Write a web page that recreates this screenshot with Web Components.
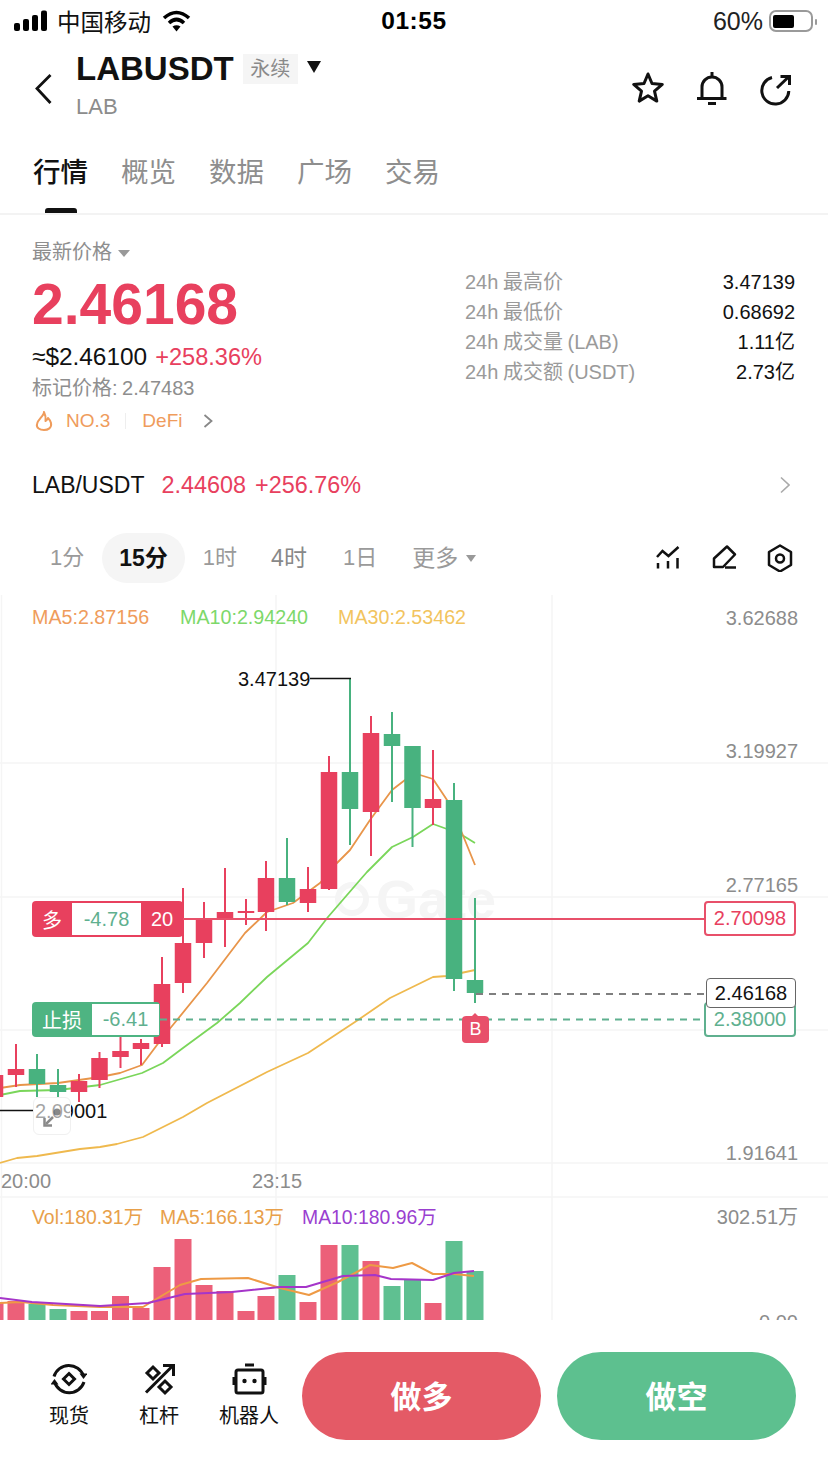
<!DOCTYPE html>
<html lang="zh">
<head>
<meta charset="utf-8">
<title>LABUSDT</title>
<style>
  html, body { margin: 0; background: #fff; }
  body { width: 828px; font-family: "Liberation Sans", "Noto Sans CJK SC", sans-serif; color: #000; }
</style>
</head>
<body>
<status-bar></status-bar>
<market-header></market-header>
<market-tabs></market-tabs>
<price-panel></price-panel>
<pair-row></pair-row>
<period-bar></period-bar>
<kline-chart></kline-chart>
<trade-bar></trade-bar>

<script>
  (function page(customElements) {
    const RED = '#e8405e';
    const GREEN = '#48b27f';

    class StatusBar extends HTMLElement {
      constructor() {
        super();
        const shadowRoot = this.attachShadow({mode: 'open'});
        shadowRoot.innerHTML = `
          <style>
            :host { display: grid; grid-template-columns: 1fr auto 1fr; align-items: center; height: 42px; padding: 0 10px 0 13px; box-sizing: border-box; }
            .left, .right { display: flex; align-items: center; }
            .left { gap: 9px; font-size: 23.5px; color: #111; }
            .right { justify-content: flex-end; gap: 6px; font-size: 25px; color: #222; }
            .time { font-size: 24.5px; font-weight: 700; letter-spacing: .6px; margin-left: -3px; }
            svg { display: block; }
          </style>
          <div class="left">
            <svg width="35" height="22" viewBox="13 9 35 22"><g fill="#000"><rect x="14" y="22" width="6" height="8" rx="2"/><rect x="23" y="18" width="6" height="12" rx="2"/><rect x="32" y="14" width="6" height="16" rx="2"/><rect x="41" y="9.5" width="6" height="20.5" rx="2"/></g></svg>
            <span>中国移动</span>
            <svg width="30" height="22" viewBox="163 10 30 22" style="margin-left:2px"><g fill="none" stroke="#000" stroke-width="3.6"><path d="M165 18Q177.5 7 190 18"/><path d="M170 23Q177.5 16 185 23"/></g><path d="M173.5 26.5Q177.5 24 181.5 26.5L177.5 31.5Z" fill="#000"/></svg>
          </div>
          <div class="time">01:55</div>
          <div class="right">
            <span>60%</span>
            <svg width="49" height="24" viewBox="769 8 49 24"><rect x="770" y="10" width="42" height="20" rx="6" fill="none" stroke="#9a9a9a" stroke-width="2"/><rect x="773" y="14" width="21" height="13" rx="2" fill="#000"/><rect x="815" y="18" width="2" height="6" rx="1" fill="#9a9a9a"/></svg>
          </div>
        `;
      }
    }

    class MarketHeader extends HTMLElement {
      constructor() {
        super();
        const shadowRoot = this.attachShadow({mode: 'open'});
        shadowRoot.innerHTML = `
          <style>
            :host { display: flex; align-items: center; height: 88px; padding: 0 35px; box-sizing: border-box; }
            svg { display: block; flex: none; margin-top: 6px; }
            .title { align-self: flex-start; margin-left: 24px; padding-top: 9px; }
            .line { display: flex; align-items: center; }
            .name { font-size: 33px; font-weight: 700; line-height: 36px; color: #111; }
            .kind { margin-left: 9px; width: 55px; height: 30px; line-height: 30px; text-align: center; background: #f5f5f5; color: #8a8a8a; font-size: 20px; margin-top: -1px; }
            .caret { margin-left: 9px; width: 0; height: 0; border: 7px solid transparent; border-top: 12px solid #111; border-bottom: 0; margin-top: -4px; }
            .sub { margin-top: 8px; line-height: 24px; font-size: 22px; color: #8c8c8c; }
            .icons { margin-left: auto; display: flex; gap: 30px; }
          </style>
          <svg width="17" height="32" viewBox="35 73 17 32"><path d="M50.5 75L37 88.5L50.5 103" fill="none" stroke="#111" stroke-width="2.8"/></svg>
          <div class="title">
            <div class="line"><span class="name">LABUSDT</span><span class="kind">永续</span><span class="caret"></span></div>
            <div class="sub">LAB</div>
          </div>
          <div class="icons">
            <svg width="34" height="34" viewBox="631 72 34 34"><path d="M648 74L652 83.5L662.3 84.4L654.5 91.1L656.8 101.1L648 95.8L639.2 101.1L641.5 91.1L633.7 84.4L644 83.5Z" fill="none" stroke="#111" stroke-width="3" stroke-linejoin="round"/></svg>
            <svg width="34" height="34" viewBox="695 72 34 34"><g fill="none" stroke="#111" stroke-width="3"><path d="M702 98V87a10 10 0 0 1 20 0V98"/><path d="M697 98.5H726.5"/><path d="M712 72V77"/><path d="M708 103.5H716"/></g></svg>
            <svg width="34" height="34" viewBox="759 72 34 34"><g fill="none" stroke="#111" stroke-width="3"><path d="M772 77.5A13.5 13.5 0 1 0 788.8 91"/><path d="M777 88L789 76.5"/><path d="M780.5 76.5H789.5V85"/></g></svg>
          </div>
        `;
      }
    }

    class MarketTabs extends HTMLElement {
      constructor() {
        super();
        const shadowRoot = this.attachShadow({mode: 'open'});
        const tabs = ['行情', '概览', '数据', '广场', '交易'];
        shadowRoot.innerHTML = `
          <style>
            :host { display: flex; gap: 33px; height: 85px; padding-left: 33px; box-sizing: border-box; border-bottom: 2px solid #f3f3f3; }
            .tab { padding-top: 29px; font-size: 27.5px; line-height: 27px; color: #8e8e8e; display: flex; flex-direction: column; align-items: center; width: 55px; white-space: nowrap; }
            .tab.on { color: #111; font-weight: 500; }
            .tab.on::after { content: ''; display: block; width: 32px; height: 5px; margin-top: 22px; border-radius: 3px 3px 0 0; background: #111; }
          </style>
          ${tabs.map((t, i) => `<div class="tab ${i === 0 ? 'on' : ''}">${t}</div>`).join('')}
        `;
      }
    }

    class PricePanel extends HTMLElement {
      constructor() {
        super();
        const shadowRoot = this.attachShadow({mode: 'open'});
        const rows = [
          ['24h 最高价', '3.47139'],
          ['24h 最低价', '0.68692'],
          ['24h 成交量 (LAB)', '1.11亿'],
          ['24h 成交额 (USDT)', '2.73亿']
        ];
        shadowRoot.innerHTML = `
          <style>
            :host { display: grid; grid-template-columns: 433px 330px; height: 235px; padding-left: 32px; box-sizing: border-box; }
            .latest { margin-top: 26px; line-height: 22px; font-size: 20px; color: #8e8e8e; display: flex; align-items: center; }
            .latest i { margin-left: 6px; margin-top: 3px; border: 6px solid transparent; border-top: 7px solid #999; border-bottom: 0; }
            .price { margin-top: 11px; line-height: 60px; font-size: 57px; font-weight: 700; color: ${RED}; }
            .fiat { margin-top: 9px; line-height: 28px; font-size: 24.4px; color: #111; white-space: nowrap; }
            .fiat span { margin-left: 8px; font-size: 23.6px; color: ${RED}; }
            .mark { margin-top: 5px; line-height: 24px; font-size: 20px; word-spacing: -1px; color: #8e8e8e; }
            .tags { margin-top: 9px; height: 24px; display: flex; align-items: center; font-size: 19px; color: #ef9c5c; }
            .tags svg { display: block; }
            .tags b { font-weight: 400; }
            .sep { width: 1px; height: 16px; background: #eee; margin: 0 16px 0 15px; }
            .table { padding-top: 52px; }
            .row { display: flex; justify-content: space-between; line-height: 30px; font-size: 20px; word-spacing: -1px; }
            .row span { color: #9a9a9a; }
            .row b { font-weight: 400; color: #111; }
          </style>
          <div>
            <div class="latest">最新价格<i></i></div>
            <div class="price">2.46168</div>
            <div class="fiat">≈$2.46100<span>+258.36%</span></div>
            <div class="mark">标记价格: 2.47483</div>
            <div class="tags">
              <svg width="31" height="22" viewBox="35 410 31 22" style="margin-left:3px"><path d="M44 412C44 416 38 419 37 424C36 428 40 430 44 430C48 430 52 428 51 423C50.5 420.5 49 419 48 418C47.5 420 46.5 420.5 45.5 421C46 418 45.5 415 44 412Z" fill="none" stroke="#ef9c5c" stroke-width="2" stroke-linejoin="round"/></svg>
              <b>NO.3</b><span class="sep"></span><b>DeFi</b>
              <svg width="10" height="16" viewBox="0 0 10 16" style="margin-left:21px"><path d="M1.5 2L8.5 8L1.5 14" fill="none" stroke="#888" stroke-width="1.8"/></svg>
            </div>
          </div>
          <div class="table">
            ${rows.map(r => `<div class="row"><span>${r[0]}</span><b>${r[1]}</b></div>`).join('')}
          </div>
        `;
      }
    }

    class PairRow extends HTMLElement {
      constructor() {
        super();
        const shadowRoot = this.attachShadow({mode: 'open'});
        shadowRoot.innerHTML = `
          <style>
            :host { display: flex; align-items: center; height: 70px; padding: 0 38px 0 32px; box-sizing: border-box; font-size: 23px; }
            .name { color: #111; }
            .val { margin-left: 17px; color: ${RED}; font-size: 23.4px; }
            .val span { margin-left: 9px; }
            svg { display: block; margin-left: auto; }
          </style>
          <span class="name">LAB/USDT</span>
          <span class="val">2.44608<span>+256.76%</span></span>
          <svg width="10" height="18" viewBox="0 0 10 18"><path d="M1 1.5L9 9L1 16.5" fill="none" stroke="#aaa" stroke-width="1.6"/></svg>
        `;
      }
    }

    class PeriodBar extends HTMLElement {
      constructor() {
        super();
        const shadowRoot = this.attachShadow({mode: 'open'});
        shadowRoot.innerHTML = `
          <style>
            :host { display: flex; align-items: center; height: 75px; padding: 0 34px 0 33px; box-sizing: border-box; }
            .item { padding: 0 17px; height: 50px; line-height: 50px; font-size: 22px; color: #9a9a9a; white-space: nowrap; display: flex; align-items: center; }
            .item.on { background: #f5f5f5; color: #111; font-weight: 700; font-size: 23px; border-radius: 25px; margin: 0 1px 0 1px; }
            .item.h4 { font-size: 23px; color: #888; }
            .item.d1 { margin-left: 2px; }
            .item.more { margin-left: 1px; font-size: 23px; }
            .item i { margin-left: 8px; margin-top: 2px; border: 5.5px solid transparent; border-top: 7px solid #999; border-bottom: 0; }
            .icons { margin-left: auto; display: flex; gap: 28px; }
            svg { display: block; }
          </style>
          <div class="item">1分</div>
          <div class="item on">15分</div>
          <div class="item">1时</div>
          <div class="item h4">4时</div>
          <div class="item d1">1日</div>
          <div class="item more">更多<i></i></div>
          <div class="icons">
            <svg width="28" height="28" viewBox="654 543 28 28"><g fill="none" stroke="#111" stroke-width="2.5"><path d="M657 556L662.5 550L668.5 555L678.5 546"/><path d="M658 562V567.5M668 560V567.5M677.5 557V567.5"/></g></svg>
            <svg width="28" height="28" viewBox="710 543 28 28"><g fill="none" stroke="#111" stroke-width="2.5" stroke-linejoin="round"><path d="M714 566V557.5L727 545.5L735 553.5L723 566Z"/><path d="M725 566.5H736"/></g></svg>
            <svg width="28" height="28" viewBox="766 543 28 28"><g fill="none" stroke="#111" stroke-width="2.5" stroke-linejoin="round"><path d="M780 544.5L791 551V564L780 570.5L769 564V551Z"/><circle cx="780" cy="557.5" r="4"/></g></svg>
          </div>
        `;
      }
    }

    // [x, wickTop, wickBottom, bodyTop, bodyBottom, up, volumeTop]
    const CANDLES = [
      [-5, 1060, 1100, 1075, 1097, 1, 1303],
      [16, 1044, 1087, 1069, 1075, 1, 1301],
      [37, 1054, 1097, 1069, 1084, 0, 1304],
      [58, 1069, 1097, 1085, 1092, 0, 1309],
      [79, 1074, 1102, 1081, 1092, 1, 1311],
      [99.5, 1052, 1088, 1058, 1080, 1, 1311],
      [120.5, 1037, 1068, 1051, 1057, 1, 1296],
      [141, 1039, 1065, 1043, 1049, 1, 1308],
      [162, 957, 1047, 984, 1044, 1, 1267],
      [183, 888, 993, 943, 983, 1, 1239],
      [204, 902, 958, 919, 943, 1, 1285],
      [225, 868, 947, 912, 919, 1, 1291],
      [246, 899, 925, 911, 913, 1, 1311],
      [266, 861, 931, 878, 912, 1, 1296],
      [287, 838, 905, 878, 902, 0, 1275],
      [308, 867, 912, 889, 903, 1, 1302],
      [329, 756, 890, 772, 889, 1, 1245],
      [350, 678, 845, 772, 809, 0, 1245],
      [371, 716, 856, 733, 812, 1, 1261],
      [392, 712, 802, 734, 746, 0, 1286],
      [412.5, 746, 847, 746, 808, 0, 1280],
      [433, 750, 825, 799, 808, 1, 1303],
      [454, 783, 991, 800, 979, 0, 1241],
      [475, 898, 1003, 980, 993, 0, 1271]
    ];
    const MA5 = '0,1088 20,1085 58,1083 100,1077 120,1073 142,1065 163,1037 177,1020 207,983 245,933 267,912 293,903 320,883 337,863 350,850 370,820 392,790 405,780 420,775 433,779 447,800 462,833 475,865';
    const MA10 = '0,1095 20,1091 58,1090 100,1085 142,1073 163,1063 183,1048 217,1023 240,1003 267,977 308,943 328,917 360,880 367,872 392,847 413,837 433,824 447,829 462,835 475,843';
    const MA30 = '0,1163 17,1158 37,1156 80,1149 100,1147 117,1144 143,1137 183,1117 207,1103 267,1072 308,1053 358,1020 390,998 433,977 447,976 475,970';
    const VOL_MA5 = '0,1303 21,1302 53,1305 100,1307 143,1307 158,1298 180,1285 201,1279 248,1278 280,1288 309,1295 338,1282 370,1265 393,1268 412,1263 433,1274 454,1274 474,1276';
    const VOL_MA10 = '0,1298 32,1302 100,1306 148,1303 185,1294 232,1292 280,1287 306,1287 343,1276 375,1275 391,1279 433,1280 454,1273 474,1271';

    class KlineChart extends HTMLElement {
      constructor() {
        super();
        const shadowRoot = this.attachShadow({mode: 'open'});
        const top = 595;
        const candles = CANDLES.map(c => {
          const color = c[5] ? RED : GREEN;
          return `<rect x="${c[0] - 1}" y="${c[1]}" width="2" height="${c[2] - c[1]}" fill="${color}"/>` +
            `<rect x="${c[0] - 8.25}" y="${c[3]}" width="16.5" height="${c[4] - c[3]}" fill="${color}"/>`;
        }).join('');
        const bars = CANDLES.map(c =>
          `<rect x="${c[0] - 8.5}" y="${c[6]}" width="17" height="${1320 - c[6]}" fill="${c[5] ? '#ec6079' : '#5fc091'}"/>`
        ).join('');
        const axis = (y, text) => `<span class="t axis" style="top:${y - top - 12}px">${text}</span>`;
        const at = (x, y, cls, text) => `<span class="t ${cls}" style="left:${x}px;top:${y - top - 12}px">${text}</span>`;
        shadowRoot.innerHTML = `
          <style>
            :host { display: block; position: relative; height: 725px; overflow: hidden; }
            svg { display: block; position: absolute; left: 0; top: 0; }
            .mark { position: absolute; left: 335px; top: 280px; display: flex; align-items: center; gap: 7px; font-size: 54px; line-height: 48px; font-weight: 700; color: #f5f5f5; }
            .mark i { width: 22px; height: 22px; border: 6px solid #f5f5f5; border-radius: 50%; }
            .t { position: absolute; line-height: 24px; font-size: 20px; white-space: nowrap; }
            .axis { right: 30px; color: #8c8c8c; }
            .time { color: #8c8c8c; }
            .black { color: #111; }
            .ma5 { color: #ef9c5c; font-size: 19.7px; }
            .ma10 { color: #7dd86a; font-size: 19.7px; }
            .ma30 { color: #f2c45e; font-size: 19.7px; }
            .vol { color: #e8a04a; font-size: 19.4px; }
            .volp { color: #9a3fd0; font-size: 19.4px; }
            .tag { position: absolute; display: flex; align-items: stretch; left: 32px; border-radius: 4px; color: #fff; font-size: 20px; box-sizing: border-box; }
            .tag span { display: flex; align-items: center; justify-content: center; }
            .tag .num { background: #fff; color: #5fb08f; margin: 2px 0; }
            .long { top: 306px; width: 151px; height: 36px; background: ${RED}; }
            .stop { top: 407px; width: 128px; height: 35px; background: #4eb482; }
            .box { position: absolute; left: 704px; width: 92px; height: 35px; box-sizing: border-box; background: #fff; border: 2px solid; border-radius: 4px; font-size: 20px; display: flex; align-items: center; justify-content: center; }
            .expand { position: absolute; left: 33px; top: 502px; width: 38px; height: 38px; box-sizing: border-box; border: 1.5px solid #f0f0f0; border-radius: 6px; background: rgba(255, 255, 255, .62); }
            .expand svg { left: 0; top: 0; }
            .buy { position: absolute; left: 462px; top: 421px; width: 27px; height: 27px; border-radius: 4px; background: #e8506a; color: #fff; font-size: 18px; display: flex; align-items: center; justify-content: center; }
            .buy::before { content: ''; position: absolute; left: 10px; top: -3px; border: 3.5px solid transparent; border-bottom: 3px solid #e8506a; border-top: 0; }
          </style>
          <div class="mark"><i></i><span>Gate</span></div>
          <svg width="828" height="725" viewBox="0 ${top} 828 725">
            <g stroke="#f5f5f5" stroke-width="1.5" fill="none">
              <path d="M0 763H828M0 897H828M0 1030H828M0 1163H828M0 1197H828"/>
              <path d="M1.5 595V1320M552 595V1320M276 595V1320"/>
            </g>
            <g fill="none" stroke-width="1.8" stroke-linejoin="round">
              <polyline points="${MA30}" stroke="#efb94e"/>
              <polyline points="${MA10}" stroke="#7ad65a"/>
              <polyline points="${MA5}" stroke="#e8954a"/>
            </g>
            ${candles}
            ${bars}
            <g fill="none" stroke-width="2" stroke-linejoin="round">
              <polyline points="${VOL_MA5}" stroke="#ee9a45"/>
              <polyline points="${VOL_MA10}" stroke="#a535c9"/>
            </g>
            <path d="M310 678.5H351" stroke="#111" stroke-width="1.5" fill="none"/>
            <path d="M0 1110.5H34" stroke="#111" stroke-width="1.5" fill="none"/>
            <path d="M183 919H706" stroke="#e8506a" stroke-width="2" fill="none"/>
            <path d="M476 994H706" stroke="#555" stroke-width="1.5" stroke-dasharray="7 6" fill="none"/>
            <path d="M160 1019.5H706" stroke="#5fb08f" stroke-width="2" stroke-dasharray="7 6" fill="none"/>
          </svg>
          ${at(32, 617, 'ma5', 'MA5:2.87156')}
          ${at(180, 617, 'ma10', 'MA10:2.94240')}
          ${at(338, 617, 'ma30', 'MA30:2.53462')}
          ${axis(618, '3.62688')}
          ${axis(751, '3.19927')}
          ${axis(885, '2.77165')}
          ${axis(1153, '1.91641')}
          ${at(238, 679, 'black', '3.47139')}
          ${at(35, 1111, 'black', '2.09001')}
          ${at(1, 1181, 'time', '20:00')}
          ${at(252, 1181, 'time', '23:15')}
          ${at(32, 1217, 'vol', 'Vol:180.31万')}
          ${at(160, 1217, 'vol', 'MA5:166.13万')}
          ${at(302, 1217, 'volp', 'MA10:180.96万')}
          ${axis(1217, '302.51万')}
          ${axis(1322, '0.00')}
          <div class="tag long"><span style="width:40px">多</span><span class="num" style="width:69px">-4.78</span><span style="width:42px">20</span></div>
          <div class="tag stop"><span style="width:60px">止损</span><span class="num" style="width:67px">-6.41</span></div>
          <div class="box" style="top:306px;border-color:#e8506a;color:${RED}">2.70098</div>
          <div class="box" style="top:407px;border-color:#5fb08f;color:#5fb08f">2.38000</div>
          <div class="box" style="top:383px;left:706px;width:90px;height:30px;border-width:1.5px;border-color:#666;color:#111">2.46168</div>
          <div class="buy">B</div>
          <div class="expand"><svg width="38" height="38" viewBox="33 1097 38 38"><circle cx="56" cy="1111" r="3.5" fill="#555" opacity=".7"/><path d="M52 1116L45 1123" stroke="#8a8a8a" stroke-width="2.5" fill="none"/><path d="M43.5 1117V1124.5H51" stroke="#8a8a8a" stroke-width="2.5" fill="none"/></svg></div>
        `;
      }
    }

    class TradeBar extends HTMLElement {
      constructor() {
        super();
        const shadowRoot = this.attachShadow({mode: 'open'});
        shadowRoot.innerHTML = `
          <style>
            :host { display: flex; align-items: flex-start; height: 152px; padding: 32px 32px 0 24px; box-sizing: border-box; }
            .tool { width: 90px; margin-top: 9px; display: flex; flex-direction: column; align-items: center; gap: 7px; font-size: 20px; line-height: 24px; color: #111; }
            svg { display: block; }
            .btn { width: 239px; height: 88px; box-sizing: border-box; padding-bottom: 4px; border-radius: 44px; display: flex; align-items: center; justify-content: center; color: #fff; font-size: 31px; font-weight: 700; }
            .long { margin-left: 8px; background: #e45a66; }
            .short { margin-left: 16px; background: #5dc08f; }
          </style>
          <div class="tool">
            <svg width="36" height="36" viewBox="51 1361 36 36"><g fill="none" stroke="#111" stroke-width="3"><path d="M54 1376.5A15.5 15.5 0 0 1 83.5 1376"/><path d="M84 1382A15.5 15.5 0 0 1 54.5 1382"/><path d="M69 1373.5L74.5 1379L69 1384.5L63.5 1379Z"/></g><path d="M79.5 1373.5H87.5L83.5 1379Z" fill="#111"/><path d="M50.5 1384.5H58.5L54.5 1379Z" fill="#111"/></svg>
            <span>现货</span>
          </div>
          <div class="tool">
            <svg width="36" height="36" viewBox="141 1361 36 36"><g fill="none" stroke="#111" stroke-width="3"><path d="M146 1392.5L173 1365.5"/><path d="M163 1365.5H173.5V1376"/><path d="M153 1367L159 1373L153 1379L147 1373Z"/><path d="M165 1381L171 1387L165 1393L159 1387Z"/></g></svg>
            <span>杠杆</span>
          </div>
          <div class="tool">
            <svg width="36" height="36" viewBox="231 1361 36 36"><rect x="236" y="1370" width="27" height="23" rx="2" fill="none" stroke="#111" stroke-width="3"/><path d="M245 1365H254" stroke="#111" stroke-width="3"/><path d="M234 1377V1385M265 1377V1385" stroke="#111" stroke-width="3"/><circle cx="244.5" cy="1381" r="2.2" fill="#111"/><circle cx="254.5" cy="1381" r="2.2" fill="#111"/></svg>
            <span>机器人</span>
          </div>
          <div class="btn long">做多</div>
          <div class="btn short">做空</div>
        `;
      }
    }

    customElements.define('status-bar', StatusBar);
    customElements.define('market-header', MarketHeader);
    customElements.define('market-tabs', MarketTabs);
    customElements.define('price-panel', PricePanel);
    customElements.define('pair-row', PairRow);
    customElements.define('period-bar', PeriodBar);
    customElements.define('kline-chart', KlineChart);
    customElements.define('trade-bar', TradeBar);
  })(window.customElements);
</script>
</body>
</html>
